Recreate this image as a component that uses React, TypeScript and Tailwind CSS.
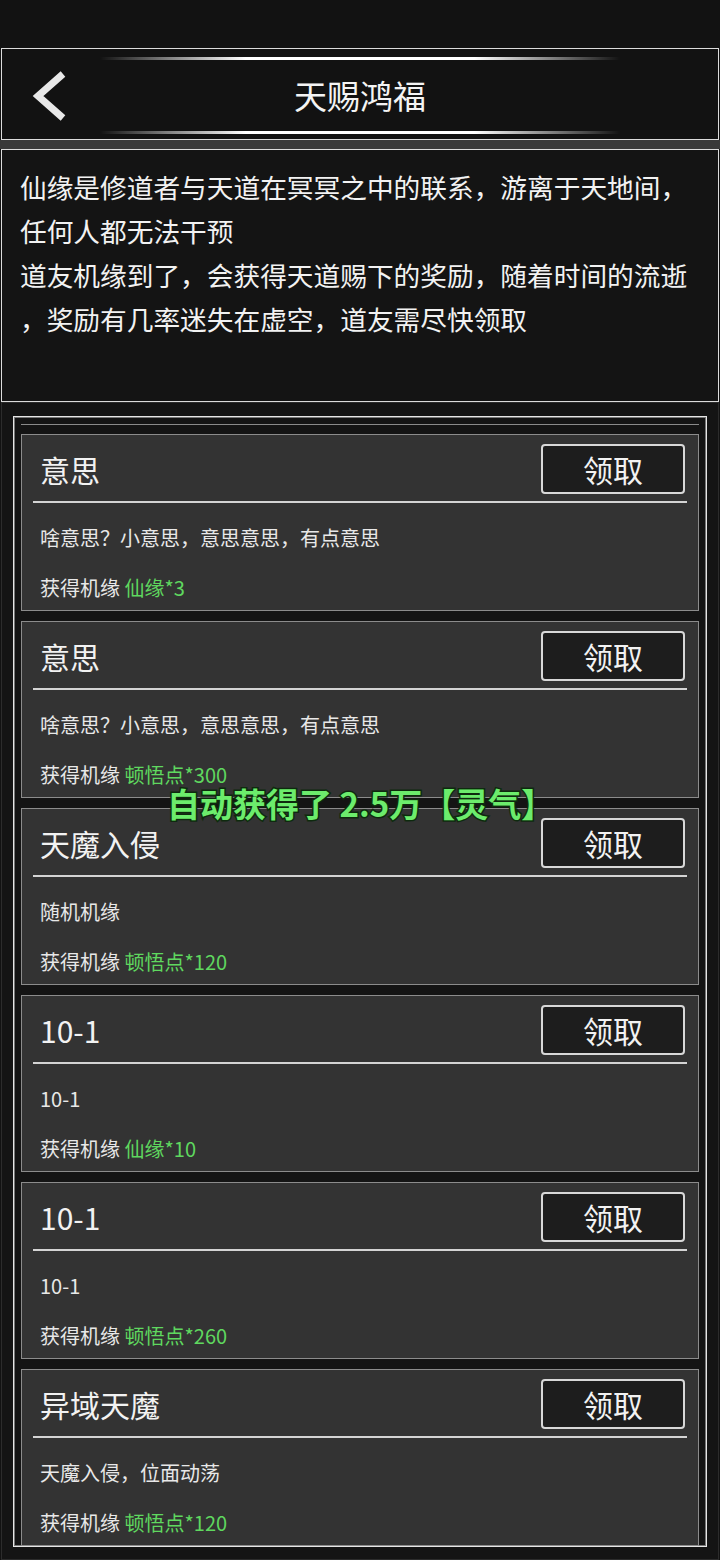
import React from 'react'

type Reward = {
    title: string
    desc: string
    prize: string
}

const rewards: Reward[] = [
    { title: '意思', desc: '啥意思？小意思，意思意思，有点意思', prize: '仙缘*3' },
    { title: '意思', desc: '啥意思？小意思，意思意思，有点意思', prize: '顿悟点*300' },
    { title: '天魔入侵', desc: '随机机缘', prize: '顿悟点*120' },
    { title: '10-1', desc: '10-1', prize: '仙缘*10' },
    { title: '10-1', desc: '10-1', prize: '顿悟点*260' },
    { title: '异域天魔', desc: '天魔入侵，位面动荡', prize: '顿悟点*120' },
]

function GlowLine() {
    return (
        <div className="w-[520px] h-[3px] bg-[linear-gradient(90deg,transparent,#ffffff_28%,#ffffff_72%,transparent)]" />
    )
}

function RewardCard({ item }: { item: Reward }) {
    return (
        <div className="bg-[#333333] border border-[#8c8c8c] h-[177px] flex flex-col">
            <div className="flex items-center justify-between pl-[18px] pr-[13px] pt-[9px]">
                <span className="text-[30px] leading-[38px] text-[#f2f2f2]">{item.title}</span>
                <button className="w-[144px] h-[50px] bg-[#1d1d1d] border-2 border-[#d8d8d8] rounded-[4px] text-[30px] leading-none text-[#f2f2f2]">
                    领取
                </button>
            </div>
            <div className="mx-[11px] mt-[7px] h-[2px] bg-[#d4d4d4]" />
            <div className="pl-[18px] mt-[20px] text-[20px] leading-[30px] text-[#e8e8e8]">{item.desc}</div>
            <div className="pl-[18px] mt-[20px] text-[20px] leading-[30px] text-[#e8e8e8]">
                获得机缘 <span className="text-[#5fd85f]">{item.prize}</span>
            </div>
        </div>
    )
}

export default function App() {
    return (
        <div className="relative w-[720px] h-[1560px] bg-[#121212] overflow-hidden font-['Noto_Sans_CJK_SC','Noto_Sans',sans-serif]">
            <div className="h-[48px] bg-[#121212]" />

            {/* header */}
            <header className="relative h-[92px] mx-[1px] border border-[#dcdcdc] bg-[#121212] flex flex-col items-center pt-[8px] pb-[5px]">
                <GlowLine />
                <div className="flex-1 flex items-center justify-center">
                    <h1 className="text-[33px] leading-none text-[#f4f4f4] font-normal">天赐鸿福</h1>
                </div>
                <GlowLine />
                <svg className="absolute left-[28px] top-[22px]" width="38" height="50" viewBox="0 0 38 50">
                    <polyline points="33,3 8,25 33,47" fill="none" stroke="#e8e8e8" strokeWidth="7" strokeLinecap="butt" strokeLinejoin="miter" />
                </svg>
            </header>

            <div className="h-[9px] bg-[#3a3a3a]" />

            {/* intro */}
            <section className="h-[253px] mx-[1px] border border-[#dcdcdc] bg-[#141414] pl-[18px] pt-[15px] text-[26.7px] leading-[44px] text-[#f2f2f2]">
                <p className="whitespace-nowrap">仙缘是修道者与天道在冥冥之中的联系，游离于天地间，</p>
                <p className="whitespace-nowrap">任何人都无法干预</p>
                <p className="whitespace-nowrap">道友机缘到了，会获得天道赐下的奖励，随着时间的流逝</p>
                <p className="whitespace-nowrap">，奖励有几率迷失在虚空，道友需尽快领取</p>
            </section>

            {/* list */}
            <section className="h-[1158px] mx-[1px] border border-[#2c2c2c] bg-[#141414] pt-[13px]">
                <div className="ml-[11px] w-[694px] border border-[#e6e6e6] shadow-[inset_0_0_0_1px_#777777] px-[7px] pt-[7px]">
                    <div className="h-[1px] bg-[#8a8a8a]" />
                    <div className="mt-[9px] flex flex-col gap-[10px]">
                        {rewards.map((r, i) => (
                            <RewardCard key={i} item={r} />
                        ))}
                    </div>
                </div>
            </section>

            {/* toast */}
            <div className="absolute left-[167px] top-[783px] whitespace-nowrap text-[33px] leading-[40px] font-bold text-[#6cec6c] [-webkit-text-stroke:3px_#0e2a0e] [paint-order:stroke_fill]">
                自动获得了 2.5万【灵气】
            </div>
        </div>
    )
}
